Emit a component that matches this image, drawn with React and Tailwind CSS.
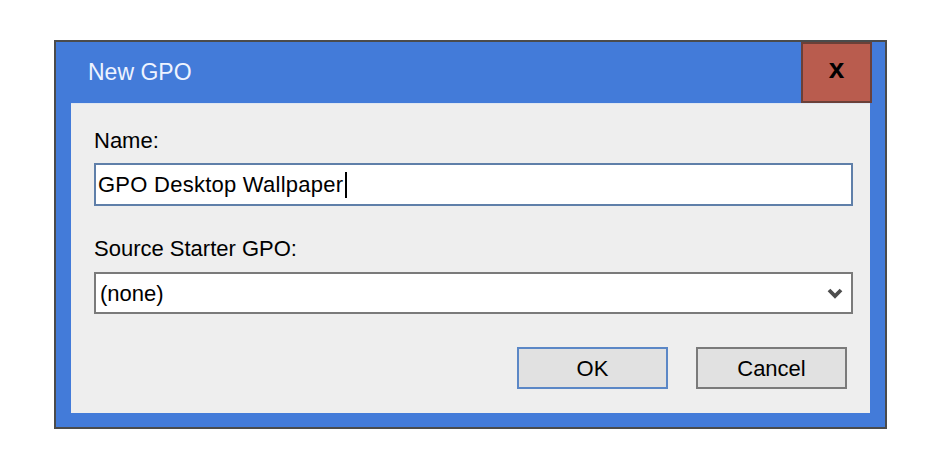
import React from 'react';

const font = { fontFamily: '"Liberation Sans", Arial, sans-serif' };

export default function App() {
  return (
    <div className="w-[931px] h-[465px] bg-white pl-[54px] pt-[40px]" style={font}>
      {/* Window frame */}
      <div className="w-[833px] h-[389px] border-2 border-[#4b4b4b] bg-[#437bd9] flex flex-col">
        {/* Title bar */}
        <div className="h-[61px] flex items-center justify-between pr-[13px]">
          <span className="pl-[32px] text-[23px] text-[#eef3ff]">New GPO</span>
          <button className="w-[71px] h-[61px] -mt-px bg-[#b95c4e] border-2 border-[#6b4038] flex items-center justify-center">
            <span className="text-[28px] font-bold leading-none text-black -mt-[6px]">x</span>
          </button>
        </div>

        {/* Client area */}
        <div className="mx-[15px] mb-[14px] flex-1 bg-[#eeeeee] border-t border-[#dfe6f0] pl-[23px] pr-[17px] pt-[24px]">
          <div className="h-[26px] leading-[26px] text-[22px] text-black">Name:</div>
          <div className="mt-[9px] h-[43px] bg-white border-2 border-[#5f7fa9] flex items-center pl-[2px]">
            <span className="text-[22px] tracking-[0.25px] text-black">GPO Desktop Wallpaper</span>
            <span className="w-[1.5px] h-[26px] bg-black ml-[2px]" />
          </div>

          <div className="mt-[30px] h-[26px] leading-[26px] text-[22px] text-black">Source Starter GPO:</div>
          <div className="mt-[10px] h-[42px] bg-white border-2 border-[#7a7a7a] flex items-center justify-between pl-[4px] pr-[8px]">
            <span className="text-[22px] text-black">(none)</span>
            <svg width="16" height="12" viewBox="0 0 16 12">
              <polyline points="2,3 8,9 14,3" fill="none" stroke="#4d4d4d" strokeWidth="3.8" />
            </svg>
          </div>

          <div className="mt-[33px] flex justify-end gap-[28px] pr-[6px]">
            <button className="w-[151px] h-[42px] bg-[#e1e1e1] border-2 border-[#5b87c6] text-[22px] text-black">
              OK
            </button>
            <button className="w-[151px] h-[42px] bg-[#e1e1e1] border-2 border-[#7a7a7a] text-[22px] text-black">
              Cancel
            </button>
          </div>
        </div>
      </div>
    </div>
  );
}
